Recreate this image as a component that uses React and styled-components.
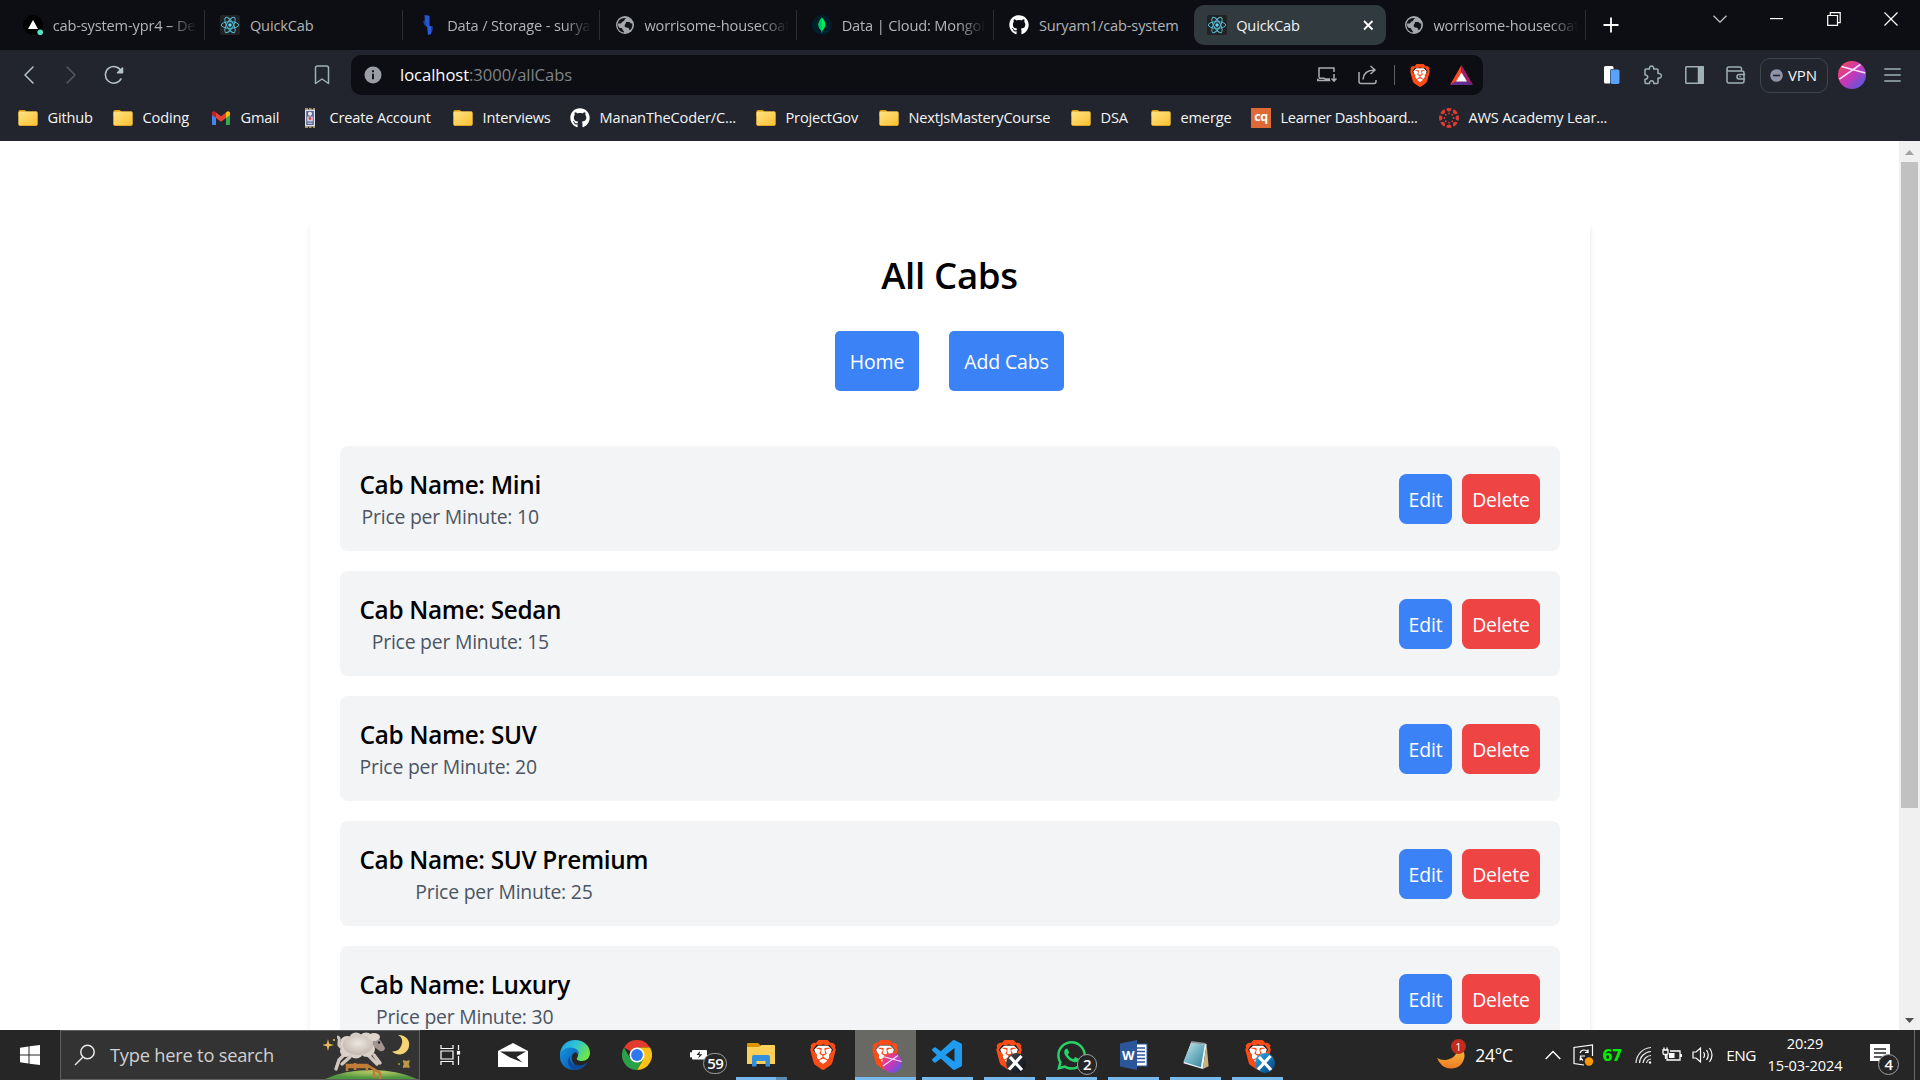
import React from "react";
import styled, { createGlobalStyle, css } from "styled-components";
import { FaGithub, FaWhatsapp } from "react-icons/fa";
import { SiBrave } from "react-icons/si";
import { BiLogoVisualStudio } from "react-icons/bi";

const GlobalStyle = createGlobalStyle`
  *, *::before, *::after { box-sizing: border-box; }
  body {
    margin: 0;
    background: #fff;
    font-family: "Open Sans", "Noto Sans", sans-serif;
    overflow: hidden;
  }
  svg { display: block; flex: none; }
  button { font: inherit; border: 0; padding: 0; cursor: pointer; }
`;

const Screen = styled.div`
  width: 1920px;
  height: 1080px;
  display: flex;
  flex-direction: column;
  overflow: hidden;
`;

/* ---------- tab strip ---------- */

const TabStrip = styled.div`
  height: 50px;
  display: flex;
  align-items: center;
  background: #0d0e13;
  padding-left: 8px;
`;

const TabCell = styled.div`
  width: 197.25px;
  height: 30px;
  display: flex;
  align-items: center;
  justify-content: center;
  border-right: 1px solid ${(p) => (p.$divider ? "#2c2e33" : "transparent")};
`;

const TabBody = styled.div`
  width: 192px;
  height: 40px;
  flex: none;
  display: flex;
  align-items: center;
  gap: 9.5px;
  padding: 0 ${(p) => (p.$active ? 10 : 4)}px 0 13px;
  border-radius: 10px;
  background: ${(p) => (p.$active ? "#303a3f" : "transparent")};
  color: ${(p) => (p.$active ? "#f0f2f3" : "#b2b4b8")};
`;

const TabTitle = styled.span`
  flex: 1;
  min-width: 0;
  overflow: hidden;
  white-space: nowrap;
  font-size: 14.6px;
  line-height: 22px;
  letter-spacing: -0.15px;
  padding-bottom: 1px;
  ${(p) =>
    p.$fade &&
    css`
      mask-image: linear-gradient(to right, #000 80%, transparent 99%);
    `}
`;

const NewTab = styled.div`
  width: 50px;
  display: flex;
  justify-content: center;
`;

const WindowControls = styled.div`
  margin-left: auto;
  margin-right: 1px;
  height: 50px;
  padding-top: 9px;
  display: flex;
`;

const ControlButton = styled.div`
  width: 57px;
  height: 20px;
  display: flex;
  align-items: center;
  justify-content: center;
`;

/* ---------- toolbar ---------- */

const Toolbar = styled.div`
  height: 45px;
  display: flex;
  align-items: center;
  padding: 5px 12px 0 8px;
  background: #22252d;
`;

const IconCell = styled.div`
  width: ${(p) => p.$w ?? 42}px;
  height: 40px;
  display: flex;
  flex: none;
  align-items: center;
  justify-content: center;
  margin-left: ${(p) => p.$left ?? 0}px;
`;

const AddressBar = styled.div`
  width: 1132px;
  height: 40px;
  margin-left: 8px;
  border-radius: 10px;
  background: #0d0e13;
  display: flex;
  align-items: center;
  padding-left: 13px;
`;

const Url = styled.span`
  flex: 1;
  margin-left: 18px;
  font-size: 16.6px;
  line-height: 24px;
  letter-spacing: -0.05px;
  padding-bottom: 1px;
  color: #7f8387;
  b { font-weight: 400; color: #fff; }
`;

const Separator = styled.div`
  width: 1.5px;
  height: 20px;
  background: #5d6064;
`;

const ToolbarEnd = styled.div`
  margin-left: auto;
  display: flex;
  align-items: center;
`;

const VpnPill = styled.div`
  width: 68px;
  height: 35px;
  margin-left: 3px;
  border: 1px solid #3c464c;
  border-radius: 10px;
  display: flex;
  align-items: center;
  padding-left: 9px;
  gap: 5px;
  color: #f2f3f4;
  font-size: 15px;
  letter-spacing: -0.1px;
`;

/* ---------- bookmarks ---------- */

const Bookmarks = styled.div`
  height: 46px;
  display: flex;
  align-items: center;
  background: #22252d;
  padding: 0 0 1px 18px;
`;

const Bookmark = styled.div`
  width: ${(p) => p.$w}px;
  flex: none;
  display: flex;
  align-items: center;
  gap: 9.5px;
  color: #f4f5f6;
  white-space: nowrap;
`;

const BookmarkLabel = styled.span`
  font-size: 14.6px;
  line-height: 22px;
  padding-bottom: 2px;
  letter-spacing: ${(p) => p.$track ?? -0.17}px;
`;

/* ---------- page ---------- */

const Viewport = styled.div`
  height: 889px;
  display: flex;
  background: #fff;
  overflow: hidden;
`;

const Page = styled.main`
  width: 1899px;
  padding-top: 80px;
  overflow: hidden;
`;

const Panel = styled.section`
  width: 1280px;
  height: 1000px;
  margin: 0 auto;
  padding: 30px;
  background: #fff;
  box-shadow: 0 5px 7.5px -1.25px rgba(0, 0, 0, 0.1), 0 2.5px 5px -2.5px rgba(0, 0, 0, 0.1);
  display: flex;
  flex-direction: column;
  align-items: center;
`;

const Title = styled.h1`
  margin: 0;
  height: 80px;
  font-size: 36.6px;
  line-height: 48px;
  font-weight: 550;
  letter-spacing: -0.3px;
  color: #000;
`;

const Actions = styled.div`
  display: flex;
  gap: 30px;
  margin-bottom: 55px;
`;

const ActionLink = styled.button`
  width: ${(p) => p.$w}px;
  height: 60px;
  border-radius: 5px;
  background: #3b82f6;
  color: #fff;
  font-size: 19.5px;
  letter-spacing: -0.15px;
  padding-top: 1px;
`;

const CabList = styled.ul`
  width: 1220px;
  margin: 0;
  padding: 0;
  list-style: none;
  display: flex;
  flex-direction: column;
  gap: 20px;
`;

const CabRow = styled.li`
  height: 105px;
  padding: 20px;
  border-radius: 8px;
  background: #f3f4f6;
  display: flex;
  align-items: center;
  justify-content: space-between;
`;

const CabInfo = styled.div`
  text-align: center;
  padding-top: 2px;
`;

const CabName = styled.h2`
  margin: 0;
  font-size: 24.3px;
  line-height: 35px;
  font-weight: 550;
  letter-spacing: -0.3px;
  color: #000;
`;

const CabPrice = styled.p`
  margin: 0;
  font-size: 19.4px;
  line-height: 30px;
  letter-spacing: -0.22px;
  color: #4b5563;
`;

const CabActions = styled.div`
  display: flex;
  gap: 10px;
`;

const RowButton = styled.button`
  width: ${(p) => p.$w}px;
  height: 50px;
  border-radius: 7.5px;
  background: ${(p) => (p.$danger ? "#ef4444" : "#3b82f6")};
  color: #fff;
  font-size: 19.4px;
  letter-spacing: -0.15px;
  padding: 2px 0 0 1px;
`;

const Scrollbar = styled.div`
  width: 21px;
  background: #f0f0f0;
  display: flex;
  flex-direction: column;
  align-items: center;
`;

const ScrollArrow = styled.div`
  height: 21px;
  padding-top: 2px;
  display: flex;
  align-items: center;
`;

const ScrollTrack = styled.div`
  flex: 1;
`;

const ScrollThumb = styled.div`
  width: 17px;
  height: 646px;
  background: #c1c1c1;
`;

/* ---------- taskbar ---------- */

const Taskbar = styled.footer`
  height: 50px;
  display: flex;
  background: #262626;
  color: #fff;
`;

const StartButton = styled.div`
  width: 60px;
  display: flex;
  align-items: center;
  justify-content: center;
`;

const SearchBox = styled.div`
  width: 360px;
  border: 1px solid #5f5f5f;
  background: #333;
  display: flex;
  align-items: center;
  padding-left: 13px;
  overflow: hidden;
`;

const SearchHint = styled.span`
  flex: 1;
  margin-left: 14px;
  padding-bottom: 1px;
  font-size: 18.3px;
  letter-spacing: -0.23px;
  color: #d0d0d0;
  white-space: nowrap;
`;

const TaskButton = styled.div`
  width: 62.05px;
  flex: none;
  display: flex;
  flex-direction: column;
  align-items: center;
`;

const TaskFace = styled.div`
  width: 61px;
  height: 47px;
  padding-top: 3px;
  display: flex;
  align-items: center;
  justify-content: center;
  background: ${(p) => (p.$active ? "#686865" : "transparent")};
`;

const TaskLine = styled.div`
  width: ${(p) => (p.$active ? 61 : 51)}px;
  height: 3px;
  background: ${(p) => (p.$on ? "#76b9ed" : "transparent")};
  border-right: ${(p) => (p.$stack ? "11px solid #5a8db5" : "0")};
`;

const IconStack = styled.div`
  position: relative;
`;

const Overlay = styled.div`
  position: absolute;
  right: ${(p) => p.$right ?? -6}px;
  bottom: ${(p) => p.$bottom ?? -3}px;
`;

const CountBadge = styled.span`
  display: flex;
  align-items: center;
  justify-content: center;
  width: ${(p) => p.$w ?? 24}px;
  height: 21px;
  padding-bottom: 1px;
  border: 1px solid #a0a0a0;
  border-radius: 11px;
  background: #262626;
  color: #fff;
  font-size: 15px;
  font-weight: 600;
  letter-spacing: -0.6px;
`;

const Tray = styled.div`
  margin-left: auto;
  display: flex;
  align-items: center;
`;

const TrayCell = styled.div`
  width: ${(p) => p.$w}px;
  margin-left: ${(p) => p.$left ?? 0}px;
  flex: none;
  height: 50px;
  display: flex;
  align-items: center;
  justify-content: center;
`;

const TrayText = styled.span`
  font-size: ${(p) => p.$size ?? 15}px;
  letter-spacing: ${(p) => p.$track ?? -0.2}px;
  white-space: nowrap;
`;

const CpuTemp = styled.span`
  font-family: "DejaVu Sans", sans-serif;
  font-weight: 700;
  font-size: 15px;
  letter-spacing: -0.7px;
  padding-top: 1px;
  color: #00f000;
`;

const Clock = styled.div`
  width: 82px;
  display: flex;
  flex-direction: column;
  align-items: center;
  font-size: 14.6px;
  line-height: 22px;
  letter-spacing: -0.1px;
  padding-bottom: 1px;
`;

const ClockLine = styled.span`
  line-height: ${(p) => p.$h}px;
`;

const AlertDot = styled.span`
  display: flex;
  align-items: center;
  justify-content: center;
  width: 15px;
  height: 15px;
  border-radius: 50%;
  background: #c42b1c;
  font-size: 11px;
  color: #fff;
`;

const ShowDesktop = styled.div`
  width: 6px;
  height: 50px;
  border-left: 1px solid #6a6a6a;
`;

/* ---------- drawings ---------- */

const ReactMark = () => (
  <svg width="20" height="20" viewBox="0 0 20 20">
    <rect width="20" height="20" rx="2" fill="#222" />
    <g fill="none" stroke="#53b7d2" strokeWidth="1">
      <ellipse cx="10" cy="10" rx="8.7" ry="3.3" />
      <ellipse cx="10" cy="10" rx="8.7" ry="3.3" transform="rotate(60 10 10)" />
      <ellipse cx="10" cy="10" rx="8.7" ry="3.3" transform="rotate(120 10 10)" />
    </g>
    <circle cx="10" cy="10" r="1.7" fill="#61dafb" />
  </svg>
);

const VercelMark = () => (
  <svg width="20" height="20" viewBox="0 0 20 20">
    <circle cx="10" cy="10" r="10" fill="#000" />
    <path d="M10 5l5 9H5z" fill="#fff" />
    <circle cx="17.2" cy="17.2" r="2.8" fill="#50e3c2" />
  </svg>
);

const StorageMark = () => (
  <svg width="20" height="20" viewBox="0 0 20 20">
    <path d="M6.500 0l5 .8V11l-3.500.5-1-1.500z" fill="#2656cf" />
    <path d="M7 5.500L5 6l1.200 4 2 .8z" fill="#1c3fa0" />
    <path d="M9 10.500l5 .7-1 7.800-3 1z" fill="#2a5cdb" />
    <path d="M13 11l2 .8-.8 5-1.200.9z" fill="#1c3fa0" />
  </svg>
);

const GlobeMark = () => (
  <svg width="20" height="20" viewBox="0 0 20 20">
    <circle cx="10" cy="10" r="9" fill="#a4a8ad" />
    <path d="M11 3.200c-2 1.200-1.200 2.700-3.200 3.200-1.500.4-1 2-2.300 2.200L3 8.500c0 3 1 4.500 2.800 4.500 2.200 0 1.200 2.600 3 3v1.500c-3.600-.4-6.300-3.500-6.300-7.300C2.500 6 6 2.500 11 3.200z" fill="#111318" />
    <path d="M11 7h3.500c.8 1.200 2 1.300 2.800 2 .2 2.500-.5 4.600-2.300 6.300-1.200-.3-.6-2.300-2-2.600-2.800-.3-3.600-1-3.300-2.500.2-1 1.300-1.300 1.300-3.200z" fill="#111318" />
  </svg>
);

const MongoMark = () => (
  <svg width="20" height="20" viewBox="0 0 20 20">
    <circle cx="10" cy="10" r="10" fill="#001e2b" />
    <path d="M10 2.500c2.400 2.800 3.600 5 3.400 7.600-.2 2.600-1.600 4.300-3 5.400l-.2 2h-.5l-.2-2c-1.600-1.200-2.900-3-3-5.400C6.400 7.500 7.600 5.300 10 2.500z" fill="#00ed64" />
    <path d="M10 2.500v15h-.3l-.2-2c-1.600-1.200-2.900-3-3-5.400C6.400 7.500 7.600 5.300 10 2.500z" fill="#00c957" />
  </svg>
);

const FolderMark = () => (
  <svg width="20" height="20" viewBox="0 0 20 20">
    <path d="M.5 3.500Q.5 2 2 2h5l1.500 2v4h-8z" fill="#dd9b0c" />
    <rect x=".5" y="3.500" width="19" height="14.500" rx="1.400" fill="#d69a1c" />
    <rect x=".5" y="3.500" width="19" height="13.800" rx="1.400" fill="url(#folderFill)" />
    <defs>
      <linearGradient id="folderFill" x1="0" y1="0" x2="1" y2="1">
        <stop offset="0" stopColor="#ffe384" />
        <stop offset="1" stopColor="#fac132" />
      </linearGradient>
    </defs>
  </svg>
);

const GmailMark = () => (
  <svg width="20" height="20" viewBox="0 0 20 20">
    <path d="M1 5v11q0 1 1 1h3V8z" fill="#4285f4" />
    <path d="M19 5v11q0 1-1 1h-3V8z" fill="#34a853" />
    <path d="M15 4.500l1.200-1c1.200-.8 2.800 0 2.800 1.500v2l-4 3z" fill="#fbbc04" />
    <path d="M5 4.500L3.800 3.500C2.600 2.700 1 3.500 1 5v2l4 3z" fill="#c5221f" />
    <path d="M5 4.500l5 3.800 5-3.800V10l-5 3.800L5 10z" fill="#ea4335" />
  </svg>
);

const StampMark = () => (
  <svg width="20" height="20" viewBox="0 0 20 20">
    <rect x="5" y="0" width="10" height="20" fill="#dfe2ee" />
    <path d="M5 .8h10M5 19.200h10" stroke="#22252d" strokeWidth="1.600" />
    <path d="M5 .8h3M9 .8h2.500M13 .8h2M5 19.200h3M9 19.200h2.500M13 19.200h2" stroke="#d9b56b" strokeWidth="1.300" />
    <rect x="6.200" y="3" width="7.600" height="14" fill="#59648f" />
    <circle cx="10" cy="5.800" r="2" fill="#e9eaf2" />
    <path d="M7.200 8.500h5.600v5H7.200z" fill="#ccd0e4" />
    <circle cx="10" cy="10.500" r="1.400" fill="#e0403a" />
    <path d="M7.500 15.200h5" stroke="#dfe2ee" />
  </svg>
);

const Cq = styled.span`
  width: 20px;
  height: 20px;
  display: flex;
  align-items: center;
  justify-content: center;
  background: #e06a36;
  color: #fff;
  font-size: 12.5px;
  font-weight: 700;
  line-height: 16px;
  padding-bottom: 2px;
  letter-spacing: -0.3px;
`;

const CanvasMark = () => (
  <svg width="20" height="20" viewBox="0 0 20 20">
    {[0, 45, 90, 135, 180, 225, 270, 315].map((a) => (
      <g key={a} transform={`rotate(${a} 10 10)`} fill="#e03c31">
        <path d="M7.300.5Q10-.4 12.700.5 12.400 3.500 10 3.500T7.300.5z" />
        <circle cx="10" cy="5.400" r=".9" />
      </g>
    ))}
  </svg>
);

const BraveMark = ({ size }) => (
  <svg width={size * 0.87} height={size} viewBox="1.600 0 20.800 24">
    <path d="M8 4.500h8l3 3-3 9.500-4 3-4-3L5 7.500z" fill="#fff" />
    <SiBrave x="0" y="0" size={24} color="#fb4b16" />
  </svg>
);

const BatMark = () => (
  <svg width="23" height="20" viewBox="0 0 23 20">
    <path d="M11.500 0L0 20l11.500-6.500z" fill="#ff4724" />
    <path d="M11.500 0L23 20l-11.500-6.500z" fill="#9e1f63" />
    <path d="M0 20h23l-11.500-7z" fill="#662d91" />
    <path d="M11.500 7.500L17 16.500H6z" fill="#fff" />
  </svg>
);

const stroke = { fill: "none", stroke: "#9fb0b6", strokeWidth: 1.5, strokeLinecap: "round", strokeLinejoin: "round" };

const XDisc = ({ fill, id, light }) => (
  <svg width="20" height="20" viewBox="0 0 20 20">
    <defs>
      <linearGradient id={id} x1="0" y1="0" x2="1" y2="1">
        <stop offset="0" stopColor={fill[0]} />
        <stop offset=".5" stopColor={fill[1]} />
        <stop offset="1" stopColor={fill[2]} />
      </linearGradient>
    </defs>
    <circle cx="10" cy="10" r="10" fill={`url(#${id})`} />
    {light ? (
      <path d="M1 13L16 2.500M2.500 4L19.500 8.500" stroke="#f9e0ff" strokeWidth="1.100" />
    ) : (
      <path d="M3 16.500L15.500 3M4 4l12 13" stroke="#fff" strokeWidth="3.200" />
    )}
  </svg>
);

const pinkBlue = ["#fb4a4d", "#c637b8", "#3b62ea"];

const MailMark = () => (
  <svg width="30" height="24" viewBox="0 0 30 24">
    <path d="M0 8L15 0l15 8v16H0z" fill="#fff" />
    <path d="M2 8.500h26l-9.500 5.500 6 5.500L12 14.500z" fill="#262626" />
  </svg>
);

const EdgeMark = () => (
  <svg width="30" height="30" viewBox="0 0 30 30">
    <defs>
      <linearGradient id="edgeTop" x1="0" y1="0" x2="1" y2=".5">
        <stop offset="0" stopColor="#1b9de2" />
        <stop offset=".5" stopColor="#2fc3d8" />
        <stop offset="1" stopColor="#6be54b" />
      </linearGradient>
      <linearGradient id="edgeSide" x1="0" y1="0" x2="1" y2="1">
        <stop offset="0" stopColor="#1393df" />
        <stop offset="1" stopColor="#0b55ae" />
      </linearGradient>
    </defs>
    <path d="M0 14C1 5 7 0 15 0c9 0 15 6 15 13 0 5-4 8-8 8-4 0-6-1.500-5-3 2.500-3 .5-7-4-7-5 0-9 2-13 3z" fill="url(#edgeTop)" />
    <path d="M0 14c2-4 6-6.500 10.500-6.500 5.500 0 9 3.500 8.500 7.500-.5-2.500-3-3.500-5-2-4 3-2.500 9 2 13 1.800 1.600 3 2.500 1 4C6 31-1 24 0 14z" fill="url(#edgeSide)" />
    <path d="M10 16c-1 6 3 9.500 9 9.500 3 0 6-1 8.500-3C25 27 20 30.500 14.500 30 8 28 6 21 10 16z" fill="#0d4c9c" />
  </svg>
);

const ChromeMark = () => (
  <svg width="30" height="30" viewBox="0 0 30 30">
    <path d="M15 15L2 7.500A15 15 0 0 1 28 7.500H15z" fill="#e33b2e" />
    <path d="M28 7.500A15 15 0 0 1 15 30l6.500-11.250L15 7.500z" fill="#fbc116" />
    <path d="M2 7.500A15 15 0 0 0 15 30l6.500-11.250H8.500z" fill="#2aa148" />
    <circle cx="15" cy="15" r="7.500" fill="#fff" />
    <circle cx="15" cy="15" r="5.900" fill="#2f77ee" />
  </svg>
);

const BatteryMark = () => (
  <svg width="30" height="24" viewBox="0 0 30 24">
    <rect x="8" y="7" width="15" height="9.500" rx="1" fill="#fff" />
    <rect x="6" y="9.300" width="2" height="5" fill="#fff" />
    <path d="M16 8l-3.500 4h3L14 15.500l4.500-4.300h-3z" fill="#262626" />
  </svg>
);

const ExplorerMark = () => (
  <svg width="28" height="24" viewBox="0 0 28 24">
    <path d="M0 1q0-1 1-1h10l2 2v3H0z" fill="#dc9500" />
    <path d="M0 4h12l2-2h13q1 0 1 1v18H0z" fill="#fccf59" />
    <path d="M5 23.500V14q0-2 2-2h14q2 0 2 2v9.500h-4.500V18h-9v5.500z" fill="#3390dc" />
  </svg>
);

const WordMark = () => (
  <svg width="28" height="30" viewBox="0 0 28 30">
    <rect x="15" y="4" width="12" height="22" fill="#fff" stroke="#2b579a" strokeWidth="1" />
    <path d="M16 8h9M16 11.500h9M16 15h9M16 18.500h9M16 22h9" stroke="#2b579a" strokeWidth="1.500" />
    <path d="M0 3.500L17 0v30L0 26.500z" fill="#2b579a" />
    <text x="2" y="19.500" fontSize="13" fontWeight="700" fill="#fff" fontFamily="Open Sans, sans-serif">W</text>
  </svg>
);

const NotepadMark = () => (
  <svg width="28" height="31" viewBox="0 0 28 32">
    <defs>
      <linearGradient id="padFill" x1="0" y1="0" x2="1" y2="1">
        <stop offset="0" stopColor="#cdeaf0" />
        <stop offset=".5" stopColor="#74b4c4" />
        <stop offset="1" stopColor="#2f8299" />
      </linearGradient>
    </defs>
    <path d="M25 5l2 22-6 3z" fill="#c9b27e" />
    <path d="M9 2l16 2-4 26L1 24z" fill="#e8f3f5" />
    <path d="M9 3l14 2-4 23L1 22.500z" fill="url(#padFill)" />
    <path d="M9 1l15 2v2L9 3z" fill="#8d9499" />
  </svg>
);

const SheepScene = () => (
  <svg width="96" height="48" viewBox="0 0 96 48">
    <defs>
      <radialGradient id="hill" cx=".55" cy=".2" r=".6">
        <stop offset="0" stopColor="#b9c968" />
        <stop offset="1" stopColor="#4f9540" />
      </radialGradient>
      <radialGradient id="wool" cx=".5" cy=".4" r=".6">
        <stop offset="0" stopColor="#ece6e0" />
        <stop offset="1" stopColor="#c4b8af" />
      </radialGradient>
    </defs>
    <path d="M0 49Q20 39 48 39t48 10z" fill="url(#hill)" />
    <path d="M24 40v-6h20v6M32 39v-7M24 36h20M44 34l13 8v7M51 37v10" stroke="#c07c35" strokeWidth="2.600" fill="none" />
    <path d="M22 23l-6 6-3 9M27 26l-8 7M51 24l6 8M46 25l8 8" stroke="#d3c6bd" strokeWidth="3.400" fill="none" strokeLinecap="round" />
    <path d="M20 17q-5-1-4-6t-2-5" stroke="#cfc5bd" strokeWidth="3" fill="none" />
    <g fill="#d9d0c9">
      <circle cx="24" cy="12" r="7" /><circle cx="33" cy="8.500" r="7" /><circle cx="43" cy="9" r="7.500" />
      <circle cx="23" cy="20" r="6" /><circle cx="33" cy="20" r="7.500" /><circle cx="44" cy="18" r="8" />
    </g>
    <ellipse cx="35" cy="14" rx="15" ry="10" fill="url(#wool)" />
    <path d="M49 8q6-3 9 2l4 7q-1 4-5 3l-6-4z" fill="#a1948f" />
    <ellipse cx="51" cy="6" rx="6" ry="4" fill="#ddd5ce" />
    <circle cx="56" cy="11.500" r="1.200" fill="#222" />
    <path d="M75 4A10 9.800 0 1 1 69 20.500Q76 21 78.500 14T75 4z" fill="#f6d374" />
    <path d="M5 8l1.200 4.800L11 14l-4.800 1.200L5 20l-1.200-4.800L-1 14l4.800-1.200z" fill="#e6bb55" />
    <circle cx="11" cy="9" r="1.100" fill="#e6bb55" />
    <path d="M80 29l3.500 1 3-1v2.500l-1 1.500 1 1.500V37l-3-.5-3.500.5v-2.500l1-1.500-1-1.500z" fill="#bb9844" />
    <circle cx="76" cy="33" r="1" fill="#bb9844" />
  </svg>
);

/* ---------- data ---------- */

const tabs = [
  { icon: <VercelMark />, title: "cab-system-ypr4 – De", fade: true, divider: true },
  { icon: <ReactMark />, title: "QuickCab", divider: true },
  { icon: <StorageMark />, title: "Data / Storage - surya", fade: true, divider: true },
  { icon: <GlobeMark />, title: "worrisome-housecoat", fade: true, divider: true },
  { icon: <MongoMark />, title: "Data | Cloud: MongoD", fade: true, divider: true },
  { icon: <FaGithub size={20} color="#fff" />, title: "Suryam1/cab-system" },
  { icon: <ReactMark />, title: "QuickCab", active: true },
  { icon: <GlobeMark />, title: "worrisome-housecoat", fade: true, divider: true },
];

const bookmarks = [
  { icon: <FolderMark />, label: "Github", w: 95 },
  { icon: <FolderMark />, label: "Coding", w: 98 },
  { icon: <GmailMark />, label: "Gmail", w: 89 },
  { icon: <StampMark />, label: "Create Account", w: 153 },
  { icon: <FolderMark />, label: "Interviews", w: 117 },
  { icon: <FaGithub size={20} color="#fff" />, label: "MananTheCoder/C...", w: 186 },
  { icon: <FolderMark />, label: "ProjectGov", w: 123 },
  { icon: <FolderMark />, label: "NextJsMasteryCourse", w: 192, track: -0.22 },
  { icon: <FolderMark />, label: "DSA", w: 80 },
  { icon: <FolderMark />, label: "emerge", w: 100 },
  { icon: <Cq>cq</Cq>, label: "Learner Dashboard...", w: 188, track: -0.33 },
  { icon: <CanvasMark />, label: "AWS Academy Lear...", w: 200 },
];

const cabs = [
  { name: "Mini", price: 10 },
  { name: "Sedan", price: 15 },
  { name: "SUV", price: 20 },
  { name: "SUV Premium", price: 25 },
  { name: "Luxury", price: 30 },
];

const taskItems = [
  {
    icon: (
      <svg width="22" height="20" viewBox="0 0 22 20" fill="none" stroke="#fff" strokeWidth="1.200">
        <path d="M1 0v3.500h12V0M1 20v-3.500h12V20M1 6h12v8H1zM18.500 0v5M18.500 11v9" />
        <rect x="17.500" y="6.500" width="2" height="2.500" fill="#fff" />
      </svg>
    ),
  },
  { icon: <MailMark /> },
  { icon: <EdgeMark /> },
  { icon: <ChromeMark /> },
  { icon: <BatteryMark />, over: <CountBadge>59</CountBadge>, right: -13, bottom: -7 },
  { icon: <ExplorerMark />, on: true, stack: true },
  { icon: <BraveMark size={30} /> },
  { icon: <BraveMark size={30} />, on: true, active: true, over: <XDisc id="avatarTask" fill={pinkBlue} light />, right: -4 },
  { icon: <BiLogoVisualStudio size={36} color="#1f9cf0" />, on: true },
  { icon: <BraveMark size={30} />, on: true, over: <XDisc id="discDark" fill={["#555", "#222a33", "#0c0f14"]} />, right: -4 },
  { icon: <FaWhatsapp size={33} color="#25d366" />, on: true, over: <CountBadge $w={20}>2</CountBadge>, right: -9, bottom: -3 },
  { icon: <WordMark />, on: true },
  { icon: <NotepadMark />, on: true },
  { icon: <BraveMark size={30} />, on: true, over: <XDisc id="discBlue" fill={["#3ab7e8", "#1273b5", "#0a3f78"]} />, right: -4 },
];

export default function App() {
  return (
    <>
      <GlobalStyle />
      <Screen>
        <TabStrip>
          {tabs.map((t, i) => (
            <TabCell key={i} $divider={t.divider}>
              <TabBody $active={t.active}>
                {t.icon}
                <TabTitle $fade={t.fade}>{t.title}</TabTitle>
                {t.active && (
                  <svg width="16" height="16" viewBox="0 0 16 16" stroke="#fff" strokeWidth="1.800">
                    <path d="M4 4l8.500 8.500M12.500 4L4 12.500" />
                  </svg>
                )}
              </TabBody>
            </TabCell>
          ))}
          <NewTab>
            <svg width="16" height="16" viewBox="0 0 16 16" stroke="#fff" strokeWidth="1.800">
              <path d="M8 .5v15M.5 8h15" />
            </svg>
          </NewTab>
          <WindowControls>
            <ControlButton>
              <svg width="14" height="8" viewBox="0 0 14 8" fill="none" stroke="#c9cacc" strokeWidth="1.200"><path d="M.5.800L7 7.200 13.500.800" /></svg>
            </ControlButton>
            <ControlButton>
              <svg width="13" height="2" viewBox="0 0 13 2"><path d="M0 0h13v1.200H0z" fill="#fff" /></svg>
            </ControlButton>
            <ControlButton>
              <svg width="14" height="14" viewBox="0 0 14 14" fill="none" stroke="#fff" strokeWidth="1.200">
                <path d="M.7 3.500h9.800v9.800H.7zM3.300 3.300V.7h9.900v9.900h-2.500" />
              </svg>
            </ControlButton>
            <ControlButton>
              <svg width="14" height="14" viewBox="0 0 14 14" stroke="#fff" strokeWidth="1.200"><path d="M.5.5l13 13M13.500.5l-13 13" /></svg>
            </ControlButton>
          </WindowControls>
        </TabStrip>

        <Toolbar>
          <IconCell>
            <svg width="12" height="20" viewBox="0 0 12 20" {...stroke} stroke="#b6c4ca"><path d="M10 2L2 10l8 8" /></svg>
          </IconCell>
          <IconCell>
            <svg width="12" height="20" viewBox="0 0 12 20" {...stroke} stroke="#55595f"><path d="M2 2l8 8-8 8" /></svg>
          </IconCell>
          <IconCell $left={1}>
            <svg width="20" height="20" viewBox="0 0 20 20" {...stroke} stroke="#b6c4ca">
              <path d="M17.500 7A8.300 8.300 0 1 0 17 13.800" />
              <path d="M18.500 3v4.800h-5z" fill="#b6c4ca" />
            </svg>
          </IconCell>
          <IconCell $left={166}>
            <svg width="16" height="20" viewBox="0 0 16 20" {...stroke}>
              <path d="M1.500 18.500V3q0-2 2-2h9q2 0 2 2v15.500L8 14z" />
            </svg>
          </IconCell>
          <AddressBar>
            <svg width="18" height="18" viewBox="0 0 18 18">
              <circle cx="9" cy="9" r="8.500" fill="#9a9ea4" />
              <path d="M9 4.200v2M9 7.800v5.500" stroke="#0d0e13" strokeWidth="1.900" />
            </svg>
            <Url><b>localhost</b>:3000/allCabs</Url>
            <IconCell $w={40}>
              <svg width="20" height="18" viewBox="0 0 20 18" fill="none" stroke="#a9adb0" strokeWidth="1.500">
                <path d="M17 6V2H2v9.500M.8 12.500v2h12.500M2 12.200h5l1 .8h5M17 8v7M14.500 12.500L17 15.200l2.500-2.700" />
              </svg>
            </IconCell>
            <IconCell $w={42}>
              <svg width="20" height="20" viewBox="0 0 20 20" fill="none" stroke="#a9adb0" strokeWidth="1.500">
                <path d="M1 7v9.500q0 2 2 2h13q2 0 2-2V15M5 14.500C5.500 8.500 9 5 16.500 5M12.500 1l4.500 4-4.500 4" />
              </svg>
            </IconCell>
            <IconCell $w={11}><Separator /></IconCell>
            <IconCell $w={39}><BraveMark size={23} /></IconCell>
            <IconCell $w={44}><BatMark /></IconCell>
          </AddressBar>
          <ToolbarEnd>
            <IconCell $w={39}>
              <svg width="17" height="20" viewBox="0 0 17 20">
                <path d="M1 2.500Q1 1 2.500 1h6.500q1.500 0 1.500 1.500V4H9Q7 4 7 6v12.500H2.500Q1 18.500 1 17z" fill="#fff" />
                <rect x="7.500" y="4.500" width="9" height="14.500" rx="1.800" fill="#5ba2fb" />
              </svg>
            </IconCell>
            <IconCell>
              <svg width="22" height="22" viewBox="0 0 22 22" {...stroke}>
                <path d="M3 5.500q0-1 1-1h3.500C6.800.6 12.300.6 11.700 4.500H15q1 0 1 1V9c4.500-.8 4.500 5.300 0 4.600V18q0 1-1 1h-3.200c.4-3.600-4.700-3.600-4.300 0H4q-1 0-1-1v-3.300c3.600.4 3.600-4.600 0-4.200z" transform="translate(1 .5)" />
              </svg>
            </IconCell>
            <IconCell>
              <svg width="19" height="18" viewBox="0 0 19 18" {...stroke}>
                <rect x=".8" y=".8" width="17.400" height="16.400" rx=".8" />
                <path d="M13.500.8h4.700v16.400h-4.700z" fill="#9fb0b6" />
              </svg>
            </IconCell>
            <IconCell>
              <svg width="20" height="18" viewBox="0 0 20 18" {...stroke}>
                <path d="M15.500 3.800V3q0-2-2-2H3Q1 1 1 3t2 2h13q2 0 2 2v8q0 2-2 2H3q-2 0-2-2V3M18.500 8.500H13q-2 0-2 2.200t2 2.300h5.500M14 10.800h.2" />
              </svg>
            </IconCell>
            <VpnPill>
              <svg width="13" height="13" viewBox="0 0 13 13">
                <circle cx="6.500" cy="6.500" r="6.300" fill="#9092a8" />
                <path d="M3 6.500h7" stroke="#22252d" strokeWidth="1.600" />
              </svg>
              VPN
            </VpnPill>
            <IconCell $w={48}>
              <svg width="28" height="28" viewBox="0 0 20 20">
                <XDisc id="avatarBar" fill={pinkBlue} light />
              </svg>
            </IconCell>
            <IconCell $w={32}>
              <svg width="17" height="14" viewBox="0 0 17 14" {...stroke}><path d="M.8 1h15.400M.8 7h15.400M.8 13h15.400" /></svg>
            </IconCell>
          </ToolbarEnd>
        </Toolbar>

        <Bookmarks>
          {bookmarks.map((b) => (
            <Bookmark key={b.label} $w={b.w}>
              {b.icon}
              <BookmarkLabel $track={b.track}>{b.label}</BookmarkLabel>
            </Bookmark>
          ))}
        </Bookmarks>

        <Viewport>
          <Page>
            <Panel>
              <Title>All Cabs</Title>
              <Actions>
                <ActionLink $w={84}>Home</ActionLink>
                <ActionLink $w={115}>Add Cabs</ActionLink>
              </Actions>
              <CabList>
                {cabs.map((c) => (
                  <CabRow key={c.name}>
                    <CabInfo>
                      <CabName>Cab Name: {c.name}</CabName>
                      <CabPrice>Price per Minute: {c.price}</CabPrice>
                    </CabInfo>
                    <CabActions>
                      <RowButton $w={53}>Edit</RowButton>
                      <RowButton $w={78} $danger>Delete</RowButton>
                    </CabActions>
                  </CabRow>
                ))}
              </CabList>
            </Panel>
          </Page>
          <Scrollbar>
            <ScrollArrow>
              <svg width="9" height="5" viewBox="0 0 9 5"><path d="M4.500 0L9 5H0z" fill="#a3a3a3" /></svg>
            </ScrollArrow>
            <ScrollTrack><ScrollThumb /></ScrollTrack>
            <ScrollArrow>
              <svg width="9" height="5" viewBox="0 0 9 5"><path d="M4.500 5L9 0H0z" fill="#505050" /></svg>
            </ScrollArrow>
          </Scrollbar>
        </Viewport>

        <Taskbar>
          <StartButton>
            <svg width="20" height="20" viewBox="0 0 20 20">
              <path d="M0 2.700l8.500-1.200v8H0zM9.500 1.300L20 0v9.500H9.500zM0 10.500h8.500v8L0 17.300zM9.500 10.500H20V20L9.500 18.700z" fill="#fff" />
            </svg>
          </StartButton>
          <SearchBox>
            <svg width="22" height="22" viewBox="0 0 22 22" fill="none" stroke="#e8e8e8" strokeWidth="1.500">
              <circle cx="13.500" cy="8" r="6.700" />
              <path d="M9 13L1 21" />
            </svg>
            <SearchHint>Type here to search</SearchHint>
            <SheepScene />
          </SearchBox>
          {taskItems.map((t, i) => (
            <TaskButton key={i}>
              <TaskFace $active={t.active}>
                <IconStack>
                  {t.icon}
                  {t.over && <Overlay $right={t.right} $bottom={t.bottom}>{t.over}</Overlay>}
                </IconStack>
              </TaskFace>
              <TaskLine $on={t.on} $active={t.active} $stack={t.stack} />
            </TaskButton>
          ))}
          <Tray>
            <TrayCell $w={38}>
              <IconStack>
                <svg width="28" height="28" viewBox="0 0 28 28">
                  <defs>
                    <linearGradient id="moonFill" x1="0" y1="0" x2="0" y2="1">
                      <stop offset="0" stopColor="#fbc43c" />
                      <stop offset="1" stopColor="#ee7a24" />
                    </linearGradient>
                  </defs>
                  <path d="M21 5q6 4 6.500 9a13 13 0 0 1-14 13.500Q4 27 0 17q5 3 11 1.500T19.500 12q2-3 1.500-7z" fill="url(#moonFill)" />
                </svg>
                <Overlay $right={-1} $bottom={15}><AlertDot>1</AlertDot></Overlay>
              </IconStack>
            </TrayCell>
            <TrayCell $w={48}><TrayText $size={17.5} $track={-0.2}>24°C</TrayText></TrayCell>
            <TrayCell $w={33} $left={18}>
              <svg width="16" height="10" viewBox="0 0 16 10" fill="none" stroke="#fff" strokeWidth="1.400"><path d="M.7 9L8 1.500 15.300 9" /></svg>
            </TrayCell>
            <TrayCell $w={28}>
              <svg width="21" height="22" viewBox="0 0 21 22" fill="none" stroke="#fff" strokeWidth="1.200">
                <path d="M19.500 12V1L1 3.500v16L11 21" />
                <path d="M7 9q1-3 4-3t4 2.500M15 5.500v3h-3M7 12h5M7.500 12q0 3 2.500 4.500M7 16.500l.5-3" />
                <circle cx="16" cy="17.500" r="4.200" fill="#ff9800" stroke="none" />
              </svg>
            </TrayCell>
            <TrayCell $w={30}><CpuTemp>67</CpuTemp></TrayCell>
            <TrayCell $w={29}>
              <svg width="17" height="18" viewBox="0 0 17 18" fill="none" stroke="#e8e8e8" strokeWidth="1.200" transform="translate(2 0)">
                <path d="M1 17A16 16 0 0 1 16 1.500M4.500 17A12 12 0 0 1 16 5.500M8 17a8.500 8.500 0 0 1 8-7.500" />
                <path d="M11.500 17a5 5 0 0 1 4.500-4" />
                <circle cx="15" cy="16.500" r="1.200" fill="#fff" stroke="none" />
              </svg>
            </TrayCell>
            <TrayCell $w={31}>
              <svg width="20" height="16" viewBox="0 0 20 16" fill="none" stroke="#fff" strokeWidth="1.300">
                <path d="M5 8v5h13V4H8M19.300 7v3M1 3h5v3q0 1.500-1 1.500H2Q1 7.500 1 6zM2 3V.5M5 3V.5M3.500 7.500V12" />
                <rect x="7" y="6" width="5.500" height="5" fill="#fff" stroke="none" />
              </svg>
            </TrayCell>
            <TrayCell $w={31}>
              <svg width="21" height="18" viewBox="0 0 21 18" fill="none" stroke="#fff" strokeWidth="1.200">
                <path d="M1 6h3l4.500-4v14L4 12H1zM11.500 6q2 3 0 6M14.500 4q3.500 5 0 10M17.500 2q5 7 0 14" />
              </svg>
            </TrayCell>
            <TrayCell $w={46}><TrayText $size={15.3} $track={-0.5}>ENG</TrayText></TrayCell>
            <Clock>
              <ClockLine $h={21}>20:29</ClockLine>
              <ClockLine $h={23}>15-03-2024</ClockLine>
            </Clock>
            <TrayCell $w={68}>
              <IconStack>
                <svg width="20" height="22" viewBox="0 0 20 22">
                  <path d="M0 0h20v17h-7v5l-5-5H0z" fill="#fff" />
                  <path d="M4 5h12M4 9h12M4 13h8" stroke="#262626" strokeWidth="1.400" />
                </svg>
                <Overlay $right={-9} $bottom={-9}><CountBadge $w={21}>4</CountBadge></Overlay>
              </IconStack>
            </TrayCell>
            <ShowDesktop />
          </Tray>
        </Taskbar>
      </Screen>
    </>
  );
}
